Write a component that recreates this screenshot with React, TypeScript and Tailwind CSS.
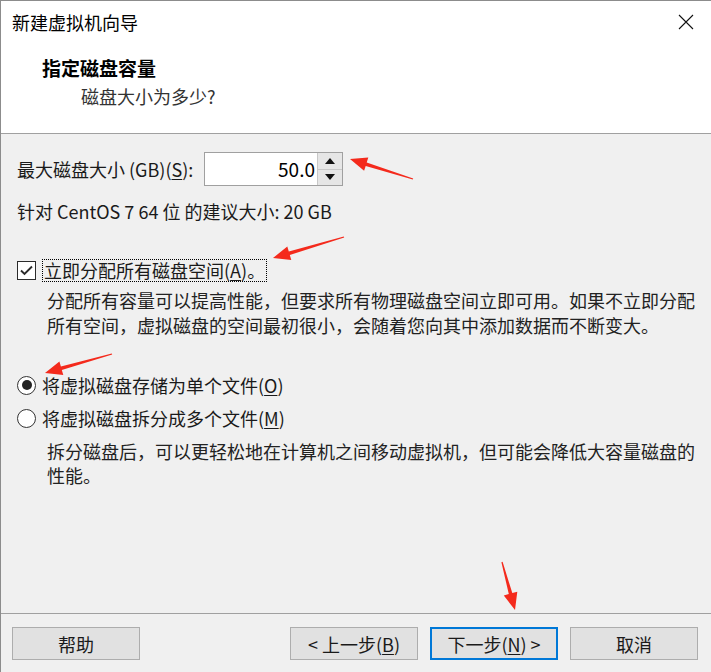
import type { ReactNode } from "react";

const Arrow = ({ x1, y1, x2, y2 }: { x1: number, y1: number, x2: number, y2: number }) => {
  // red annotation arrow, tail (x1,y1) -> tip (x2,y2)
  const dx = x2 - x1
  const dy = y2 - y1
  const len = Math.hypot(dx, dy)
  const ux = dx / len
  const uy = dy / len
  const nx = -uy
  const ny = ux
  const L = 17
  const bx = x2 - ux * L
  const by = y2 - uy * L
  const p = (x: number, y: number) => `${x.toFixed(1)},${y.toFixed(1)}`
  const pts = [
    p(x1 + nx * 0.6, y1 + ny * 0.6),
    p(bx + nx * 1.8, by + ny * 1.8),
    p(bx + nx * 7, by + ny * 7),
    p(x2, y2),
    p(bx - nx * 7, by - ny * 7),
    p(bx - nx * 1.8, by - ny * 1.8),
    p(x1 - nx * 0.6, y1 - ny * 0.6),
  ].join(" ")
  return <polygon points={pts} fill="#f42a1c" />
}

const U = ({ children }: { children: ReactNode }) => <span className="underline underline-offset-2">{children}</span>

const Btn = ({ children, primary }: { children: ReactNode, primary?: boolean }) => (
  <button
    className={`w-[128px] h-[33px] bg-[#e1e1e1] text-[18px] leading-[24px] text-[#1a1a1a] ${primary ? "border-2 border-[#0078d7]" : "border border-[#adadad]"}`}
  >
    {children}
  </button>
)

export default function App() {
  return (
    <div className="relative w-[711px] h-[672px] flex flex-col bg-[#f0f0f0] border-l border-t border-[#8c8c8c] font-['Noto_Sans_CJK_SC',sans-serif] text-[#1a1a1a] overflow-hidden">
      {/* header */}
      <div className="h-[133px] bg-white border-b border-[#a0a0a0] pl-[11px] pt-[9px]">
        <div className="flex items-center justify-between h-[24px] pr-[17px]">
          <span className="text-[18px] leading-[24px] text-black">新建虚拟机向导</span>
          <svg width="16" height="16" viewBox="0 0 16 16">
            <path d="M1 1 L15 15 M15 1 L1 15" stroke="#111" strokeWidth="1.1" />
          </svg>
        </div>
        <div className="ml-[30px] mt-[21px] text-[19px] leading-[26px] font-bold text-black">指定磁盘容量</div>
        <div className="ml-[69px] mt-[3px] text-[18px] leading-[24px] text-[#333]">磁盘大小为多少?</div>
      </div>

      {/* body */}
      <div className="flex-1 px-[16px] pt-[18px]">
        <div className="flex items-center">
          <span className="w-[187px] text-[18px] leading-[24px]">最大磁盘大小 (GB)(<U>S</U>):</span>
          <div className="flex w-[139px] h-[34px] border border-[#a0a0a0] bg-white">
            <div className="flex-1 flex items-center justify-end pr-[2px] text-[19px] leading-[24px] text-black">50.0</div>
            <div className="w-[25px] flex flex-col border-l border-[#c8c8c8]">
              <div className="flex-1 flex items-center justify-center bg-[#e6e6e6] border-b border-[#c8c8c8]">
                <svg width="10" height="6" viewBox="0 0 10 6"><path d="M0 6 L5 0 L10 6 Z" fill="#111" /></svg>
              </div>
              <div className="flex-1 flex items-center justify-center bg-[#e6e6e6]">
                <svg width="10" height="6" viewBox="0 0 10 6"><path d="M0 0 L10 0 L5 6 Z" fill="#111" /></svg>
              </div>
            </div>
          </div>
        </div>

        <div className="mt-[13px] text-[18px] leading-[24px]">针对 CentOS 7 64 位 的建议大小: 20 GB</div>

        <div className="mt-[36px] flex items-center gap-[6px] h-[23px]">
          <div className="w-[19px] h-[19px] border border-[#2b2b2b] bg-white flex items-center justify-center">
            <svg width="17" height="17" viewBox="0 0 17 17">
              <path d="M3 8.5 L6.5 12 L14 4.5" fill="none" stroke="#2b2b2b" strokeWidth="1.9" />
            </svg>
          </div>
          <span className="h-[23px] border border-dotted border-black px-[1px] text-[18px] leading-[21px]">立即分配所有磁盘空间(<U>A</U>)。</span>
        </div>

        <div className="ml-[30px] mt-[6px] text-[18px] leading-[25px] text-[#222] whitespace-nowrap">
          <div>分配所有容量可以提高性能，但要求所有物理磁盘空间立即可用。如果不立即分配</div>
          <div>所有空间，虚拟磁盘的空间最初很小，会随着您向其中添加数据而不断变大。</div>
        </div>

        <div className="mt-[35px] flex items-center gap-[6px] h-[24px]">
          <div className="w-[19px] h-[19px] rounded-full border border-[#333] bg-white flex items-center justify-center">
            <div className="w-[10px] h-[10px] rounded-full bg-[#222]" />
          </div>
          <span className="text-[18px] leading-[24px]">将虚拟磁盘存储为单个文件(<U>O</U>)</span>
        </div>

        <div className="mt-[9px] flex items-center gap-[6px] h-[24px]">
          <div className="w-[19px] h-[19px] rounded-full border border-[#333] bg-white" />
          <span className="text-[18px] leading-[24px]">将虚拟磁盘拆分成多个文件(<U>M</U>)</span>
        </div>

        <div className="ml-[30px] mt-[9px] text-[18px] leading-[24px] text-[#222] whitespace-nowrap">
          <div>拆分磁盘后，可以更轻松地在计算机之间移动虚拟机，但可能会降低大容量磁盘的</div>
          <div>性能。</div>
        </div>
      </div>

      {/* footer */}
      <div className="h-[59px] border-t border-[#a0a0a0] flex items-start pt-[13px] pl-[11px] pr-[13px]">
        <Btn>帮助</Btn>
        <div className="flex-1" />
        <div className="flex gap-[12px]">
          <Btn>&lt; 上一步(<U>B</U>)</Btn>
          <Btn primary>下一步(<U>N</U>) &gt;</Btn>
          <Btn>取消</Btn>
        </div>
      </div>

      {/* annotations */}
      <svg className="absolute left-[-1px] top-[-1px] pointer-events-none" width="711" height="672">
        <Arrow x1={413} y1={179} x2={350} y2={159} />
        <Arrow x1={344} y1={237} x2={273} y2={258} />
        <Arrow x1={112} y1={354} x2={45} y2={373} />
        <Arrow x1={502} y1={562} x2={515} y2={610} />
      </svg>
    </div>
  )
}
